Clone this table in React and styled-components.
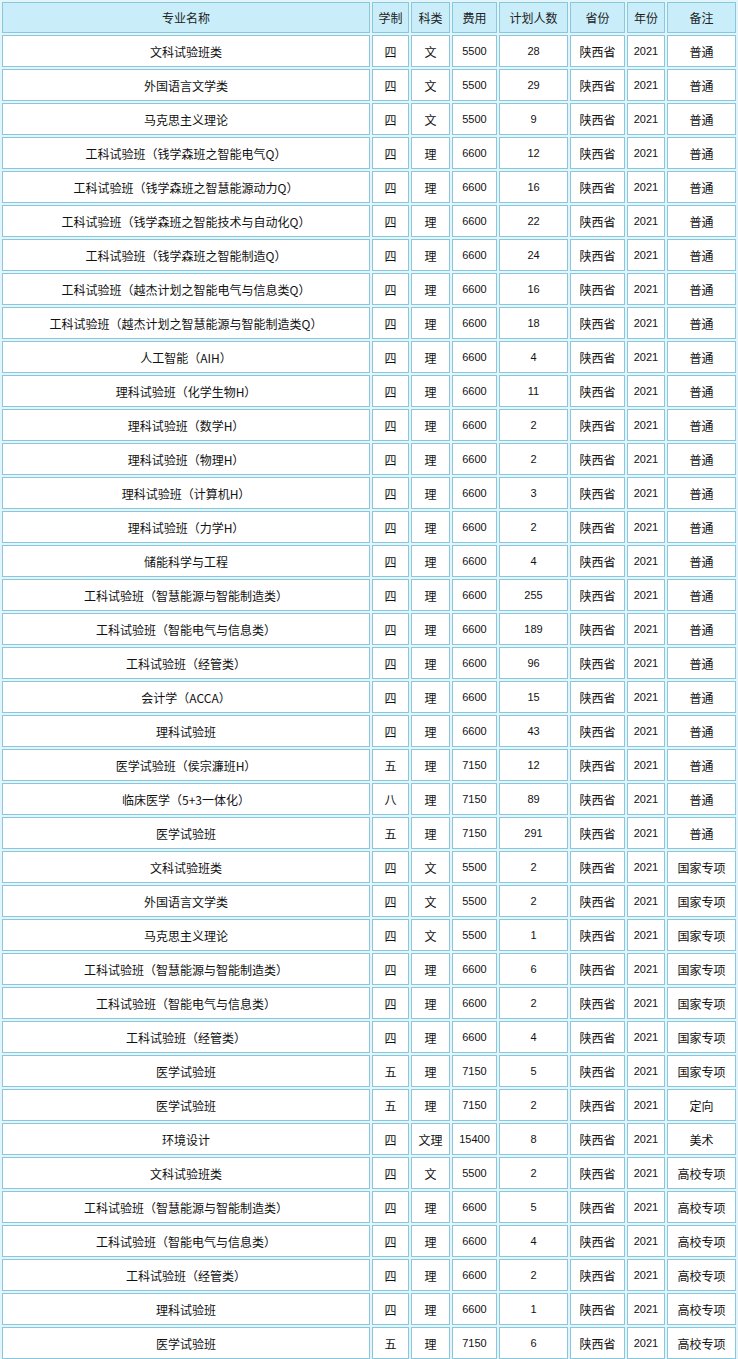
import React from "react";
import styled, { createGlobalStyle } from "styled-components";

const Global = createGlobalStyle`
  html, body { margin: 0; padding: 0; background: #ffffff; }
  body { font-family: "Liberation Sans", "Noto Sans CJK SC", sans-serif; }
`;

const Table = styled.table`
  width: 738px;
  table-layout: fixed;
  border-collapse: separate;
  border-spacing: 2px;
  background: #e2f5fb;
  margin: 0;
`;

const Th = styled.th`
  box-sizing: border-box;
  width: ${(p) => p.$w}px;
  height: 31px;
  padding: 0;
  border: 1px solid #8ac6dc;
  background: #c9eefa;
  color: #222;
  font-weight: normal;
  font-size: 12px;
  text-align: center;
  vertical-align: middle;
  font-family: "Noto Sans CJK SC", sans-serif;
`;

const Td = styled.td`
  box-sizing: border-box;
  height: 32px;
  padding: 0;
  border: 1px solid #8ac6dc;
  background: #ffffff;
  color: #111;
  font-size: ${(p) => (p.$num ? "11px" : "12px")};
  font-family: ${(p) =>
    p.$num
      ? '"Liberation Sans", "Noto Sans CJK SC", sans-serif'
      : '"Noto Sans CJK SC", sans-serif'};
  text-align: center;
  vertical-align: middle;
  white-space: nowrap;
`;

const cols = [
  ["专业名称", 368],
  ["学制", 37],
  ["科类", 39],
  ["费用", 45],
  ["计划人数", 69],
  ["省份", 55],
  ["年份", 38],
  ["备注", 69],
];

const rows = [
  ["文科试验班类", "四", "文", "5500", "28", "普通"],
  ["外国语言文学类", "四", "文", "5500", "29", "普通"],
  ["马克思主义理论", "四", "文", "5500", "9", "普通"],
  ["工科试验班（钱学森班之智能电气Q）", "四", "理", "6600", "12", "普通"],
  ["工科试验班（钱学森班之智慧能源动力Q）", "四", "理", "6600", "16", "普通"],
  ["工科试验班（钱学森班之智能技术与自动化Q）", "四", "理", "6600", "22", "普通"],
  ["工科试验班（钱学森班之智能制造Q）", "四", "理", "6600", "24", "普通"],
  ["工科试验班（越杰计划之智能电气与信息类Q）", "四", "理", "6600", "16", "普通"],
  ["工科试验班（越杰计划之智慧能源与智能制造类Q）", "四", "理", "6600", "18", "普通"],
  ["人工智能（AIH）", "四", "理", "6600", "4", "普通"],
  ["理科试验班（化学生物H）", "四", "理", "6600", "11", "普通"],
  ["理科试验班（数学H）", "四", "理", "6600", "2", "普通"],
  ["理科试验班（物理H）", "四", "理", "6600", "2", "普通"],
  ["理科试验班（计算机H）", "四", "理", "6600", "3", "普通"],
  ["理科试验班（力学H）", "四", "理", "6600", "2", "普通"],
  ["储能科学与工程", "四", "理", "6600", "4", "普通"],
  ["工科试验班（智慧能源与智能制造类）", "四", "理", "6600", "255", "普通"],
  ["工科试验班（智能电气与信息类）", "四", "理", "6600", "189", "普通"],
  ["工科试验班（经管类）", "四", "理", "6600", "96", "普通"],
  ["会计学（ACCA）", "四", "理", "6600", "15", "普通"],
  ["理科试验班", "四", "理", "6600", "43", "普通"],
  ["医学试验班（侯宗濂班H）", "五", "理", "7150", "12", "普通"],
  ["临床医学（5+3一体化）", "八", "理", "7150", "89", "普通"],
  ["医学试验班", "五", "理", "7150", "291", "普通"],
  ["文科试验班类", "四", "文", "5500", "2", "国家专项"],
  ["外国语言文学类", "四", "文", "5500", "2", "国家专项"],
  ["马克思主义理论", "四", "文", "5500", "1", "国家专项"],
  ["工科试验班（智慧能源与智能制造类）", "四", "理", "6600", "6", "国家专项"],
  ["工科试验班（智能电气与信息类）", "四", "理", "6600", "2", "国家专项"],
  ["工科试验班（经管类）", "四", "理", "6600", "4", "国家专项"],
  ["医学试验班", "五", "理", "7150", "5", "国家专项"],
  ["医学试验班", "五", "理", "7150", "2", "定向"],
  ["环境设计", "四", "文理", "15400", "8", "美术"],
  ["文科试验班类", "四", "文", "5500", "2", "高校专项"],
  ["工科试验班（智慧能源与智能制造类）", "四", "理", "6600", "5", "高校专项"],
  ["工科试验班（智能电气与信息类）", "四", "理", "6600", "4", "高校专项"],
  ["工科试验班（经管类）", "四", "理", "6600", "2", "高校专项"],
  ["理科试验班", "四", "理", "6600", "1", "高校专项"],
  ["医学试验班", "五", "理", "7150", "6", "高校专项"],
];

export default function App() {
  return (
    <>
      <Global />
      <Table>
        <thead>
          <tr>
            {cols.map(([t, w]) => (
              <Th key={t} $w={w}>
                {t}
              </Th>
            ))}
          </tr>
        </thead>
        <tbody>
          {rows.map((r, i) => (
            <tr key={i}>
              <Td>{r[0]}</Td>
              <Td>{r[1]}</Td>
              <Td>{r[2]}</Td>
              <Td $num>{r[3]}</Td>
              <Td $num>{r[4]}</Td>
              <Td>陕西省</Td>
              <Td $num>2021</Td>
              <Td>{r[5]}</Td>
            </tr>
          ))}
        </tbody>
      </Table>
    </>
  );
}
